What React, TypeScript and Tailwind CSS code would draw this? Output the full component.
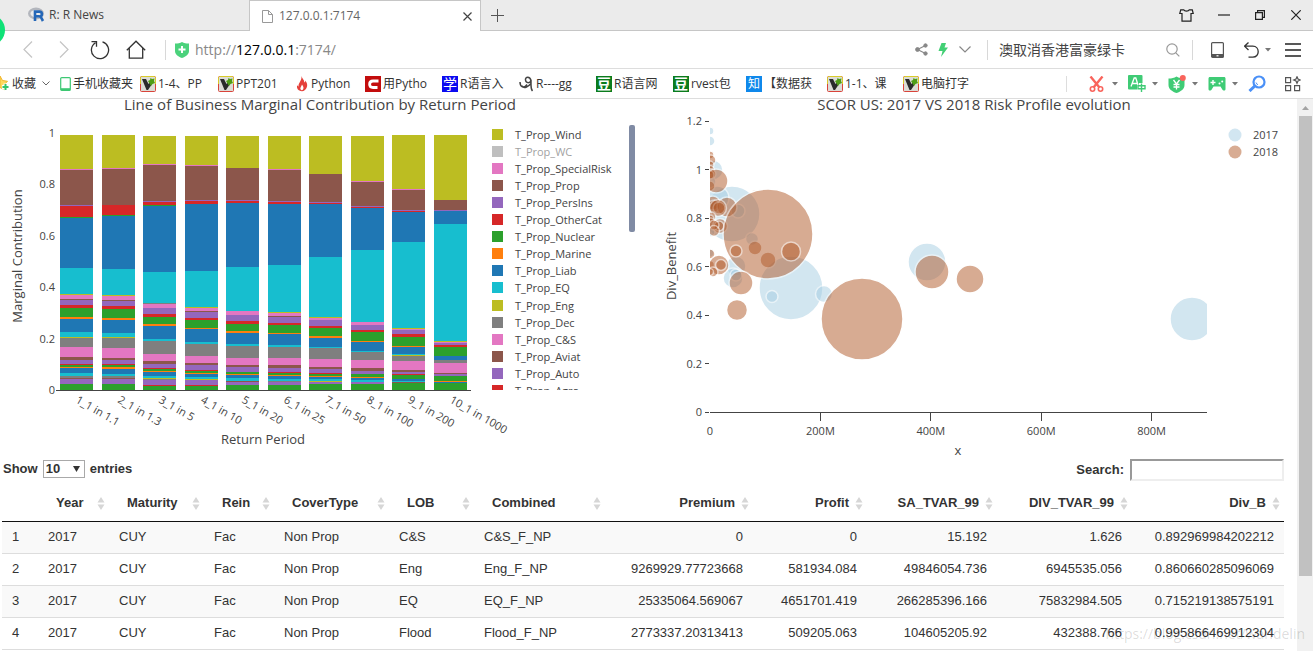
import type { ReactNode } from "react";

const COLORS: Record<string, string> = {
  Y: "#bcbd22",
  P: "#e377c2",
  B: "#8c564b",
  V: "#9467bd",
  R: "#d62728",
  G: "#2ca02c",
  O: "#ff7f0e",
  L: "#1f77b4",
  C: "#17becf",
  N: "#7f7f7f",
};

// Each stack runs top to bottom: colour key + segment height
const BARS = [
  { label: "1_1 in 1.1", x: 60, stack: "Y34 P1 B35 V1 R11 G1 L50 C26 Y1 P4 B1 V5 R3 G9 O2 L13 C5 Y1 N9 P10 B3 V4 R1 G2 O1 L5 C3 N2 B1 V5 G6" },
  { label: "2_1 in 1.3", x: 102, stack: "Y33 P1 B36 R10 G1 L53 C26 Y1 P4 B1 V5 R3 G9 O2 L13 C4 Y1 N10 P10 B2 V4 R1 G2 O2 L5 C2 N2 B1 V5 G6" },
  { label: "3_1 in 5", x: 143, stack: "Y28 P1 B36 V1 R3 G1 L66 C31 N1 P4 V6 R3 G7 O2 L13 C2 N13 P7 B3 V4 R1 G2 O1 L4 C2 Y1 N1 V5 R1 G4" },
  { label: "4_1 in 10", x: 185, stack: "Y29 P1 B34 V1 R3 L67 C36 Y1 P3 B1 V6 R2 G8 O1 L13 C2 N12 P7 B2 V5 R1 G2 O1 L3 C2 Y1 V5 R1 G4" },
  { label: "5_1 in 20", x: 226, stack: "Y32 B32 V1 R2 L64 C44 P4 V6 R3 G7 O2 L11 C2 N12 P7 B2 V5 G2 O1 L3 C3 B1 V3 G5" },
  { label: "6_1 in 25", x: 268, stack: "Y33 P1 B31 V1 R2 L61 C47 Y1 P3 B1 V6 R2 G8 O1 L11 C2 N11 P7 B3 V4 R1 G2 O1 L3 C2 N1 V3 G5" },
  { label: "7_1 in 50", x: 309, stack: "Y38 B28 V1 R1 L53 C60 Y1 P2 V6 R2 G8 O2 L9 C1 N11 P8 B2 V4 R1 G2 O1 L2 C2 Y1 V2 G6" },
  { label: "8_1 in 100", x: 351, stack: "Y45 P1 B24 V1 R1 L42 C72 P3 V5 R2 G9 O1 L9 C1 N8 P8 B3 V3 G3 O1 L2 C2 V2 G6" },
  { label: "9_1 in 200", x: 392, stack: "Y54 P1 B20 V1 R1 L30 C86 Y1 P1 V4 R3 G9 O1 L7 C1 Y1 N5 P9 B2 V2 R1 G4 L2 C1 B1 G7" },
  { label: "10_1 in 1000", x: 434, stack: "Y65 B10 V1 L13 C117 Y1 P1 V2 R2 G9 L4 N3 P10 B1 V2 G5 O1 L1 G7" },
];

const LEGEND = [
  ["T_Prop_Wind", "Y"],
  ["T_Prop_WC", "N"],
  ["T_Prop_SpecialRisk", "P"],
  ["T_Prop_Prop", "B"],
  ["T_Prop_PersIns", "V"],
  ["T_Prop_OtherCat", "R"],
  ["T_Prop_Nuclear", "G"],
  ["T_Prop_Marine", "O"],
  ["T_Prop_Liab", "L"],
  ["T_Prop_EQ", "C"],
  ["T_Prop_Eng", "Y"],
  ["T_Prop_Dec", "N"],
  ["T_Prop_C&S", "P"],
  ["T_Prop_Aviat", "B"],
  ["T_Prop_Auto", "V"],
  ["T_Prop_Agro", "R"],
];

// [cx, cy, r] measured from the plot's top left corner
const BUBBLES_2017 = [
  [0, 9, 4], [0, 19, 5], [3, 48, 10], [0, 60, 6], [22, 92, 28], [7, 76, 12], [28, 89, 7], [4, 84, 8],
  [0, 110, 5], [42, 117, 6.5], [26, 144, 10], [23, 156, 10], [26, 153, 6], [0, 131, 4], [81, 166, 32],
  [62, 174.5, 6], [114, 172, 8.5], [217, 140, 19], [482, 197, 22],
];
const BUBBLES_2018 = [
  [0, 33, 4], [1, 38, 5], [0, 43, 4], [0, 48, 4.5], [1, 52, 5], [0, 53, 4], [0, 64, 5], [6, 59, 12],
  [3, 81, 7], [4, 84, 6], [17, 85, 10], [9, 86, 6], [8, 86, 8.5], [1, 95, 5], [0, 97, 4], [1, 101, 5],
  [10, 104, 7.5], [9, 104, 5], [4, 103, 5], [4, 109, 5.5], [0, 132, 5], [0, 143, 4.5], [9, 143, 10], [11, 143, 5.5],
  [3, 150, 5], [0, 150, 3.5], [45, 126, 7], [58, 138, 8], [58, 112, 45], [26, 129, 6], [81, 129.5, 9.5],
  [31, 161, 12], [27, 188, 10.5], [152, 197, 41], [222, 150, 17], [260, 157, 14],
];

const COLUMNS = [
  { name: "", width: "w-8" },
  { name: "Year", width: "w-[71px]" },
  { name: "Maturity", width: "w-[95px]" },
  { name: "Rein", width: "w-[70px]" },
  { name: "CoverType", width: "w-[115px]" },
  { name: "LOB", width: "w-[85px]" },
  { name: "Combined", width: "w-[131px]" },
  { name: "Premium", width: "w-[148px]", num: true },
  { name: "Profit", width: "w-[114px]", num: true },
  { name: "SA_TVAR_99", width: "w-[130px]", num: true },
  { name: "DIV_TVAR_99", width: "w-[135px]", num: true },
  { name: "Div_B", width: "", num: true },
];

const ROWS = [
  ["1", "2017", "CUY", "Fac", "Non Prop", "C&S", "C&S_F_NP", "0", "0", "15.192", "1.626", "0.892969984202212"],
  ["2", "2017", "CUY", "Fac", "Non Prop", "Eng", "Eng_F_NP", "9269929.77723668", "581934.084", "49846054.736", "6945535.056", "0.860660285096069"],
  ["3", "2017", "CUY", "Fac", "Non Prop", "EQ", "EQ_F_NP", "25335064.569067", "4651701.419", "266285396.166", "75832984.505", "0.715219138575191"],
  ["4", "2017", "CUY", "Fac", "Non Prop", "Flood", "Flood_F_NP", "2773337.20313413", "509205.063", "104605205.92", "432388.766", "0.995866469912304"],
];

function Caret() {
  return (
    <svg width="6" height="4" viewBox="0 0 6 4" aria-hidden="true">
      <path d="M0 0h6L3 3.5z" fill="#777" />
    </svg>
  );
}

function Divider() {
  return <span className="h-5 w-px shrink-0 bg-[#d8d8d8]" />;
}

function IconButton({ label, className = "w-5", children }: { label: string; className?: string; children: ReactNode }) {
  return (
    <button aria-label={label} className={`flex h-6 shrink-0 items-center justify-center ${className}`}>
      {children}
    </button>
  );
}

function TabBar() {
  return (
    <div className="flex h-[31px] items-stretch border-b border-[#c6c6c6] bg-[#ebebeb] text-[12px] text-[#444]">
      <button className="flex w-[249px] items-center gap-1 pl-7">
        <svg width="17" height="16" viewBox="0 0 17 16" aria-hidden="true">
          <ellipse cx="8" cy="6.5" rx="6.8" ry="4.8" fill="none" stroke="#b3b6bd" strokeWidth="2.4" />
          <path d="M7 14V4.6h4.2c3.4 0 3.6 4.3.6 4.6 1.400.6 2.200 3 3.200 4.800M8 9.200h3.500" fill="none" stroke="#2467b8" strokeWidth="2.600" />
        </svg>
        R: R News
      </button>
      <div className="-mb-px flex w-[232px] items-center border-x border-t border-[#c6c6c6] bg-white pl-3 pr-2">
        <button className="flex flex-1 items-center gap-[6px] text-[#666]">
          <svg width="11" height="13" viewBox="0 0 11 13" fill="none" stroke="#999" aria-hidden="true">
            <path d="M.5.5h6l4 4v8H.5zM6.500.5v4h4" />
          </svg>
          127.0.0.1:7174
        </button>
        <IconButton label="Close tab" className="w-[10px]">
          <svg width="9" height="9" viewBox="0 0 9 9" stroke="#444" strokeWidth="1.200">
            <path d="M.5.5l8 8M8.500.5l-8 8" />
          </svg>
        </IconButton>
      </div>
      <button aria-label="New tab" className="flex w-8 items-center justify-center">
        <svg width="13" height="13" viewBox="0 0 13 13" stroke="#555">
          <path d="M6.500 0v13M0 6.500h13" />
        </svg>
      </button>
      <div className="ml-auto flex items-center gap-[18px] pr-[7px]">
        <IconButton label="Skins">
          <svg width="15" height="13" viewBox="0 0 15 13" fill="none" stroke="#222" strokeWidth="1.200">
            <path d="M4.700.8h-3L.8 4.500h2.200v7.700h9V4.500h2.200L13.300.8h-3c-.8 1.700-4.800 1.700-5.600 0z" />
          </svg>
        </IconButton>
        <IconButton label="Minimize">
          <svg width="12" height="2" viewBox="0 0 12 2">
            <path d="M0 1h12" stroke="#222" strokeWidth="1.200" />
          </svg>
        </IconButton>
        <IconButton label="Restore" className="w-4">
          <svg width="10" height="10" viewBox="0 0 10 10" fill="none" stroke="#222" strokeWidth="1.200">
            <path d="M.6 2.600h6.800v6.800H.6zM2.600 2.600V.6h6.800v6.800h-2" />
          </svg>
        </IconButton>
        <IconButton label="Close">
          <svg width="10" height="10" viewBox="0 0 10 10" stroke="#222" strokeWidth="1.200">
            <path d="M.3.3l9.400 9.400M9.700.3L.3 9.700" />
          </svg>
        </IconButton>
      </div>
    </div>
  );
}

function NavBar() {
  return (
    <div className="flex h-[38px] items-center border-b border-[#ddd] bg-white">
      <div className="flex items-center gap-4 pl-[18px]">
        <IconButton label="Back">
          <svg width="10" height="17" viewBox="0 0 10 17" fill="none" stroke="#c4c4c4" strokeWidth="1.200">
            <path d="M9 .5l-8 8 8 8" />
          </svg>
        </IconButton>
        <IconButton label="Forward">
          <svg width="10" height="17" viewBox="0 0 10 17" fill="none" stroke="#c4c4c4" strokeWidth="1.200">
            <path d="M1 .5l8 8-8 8" />
          </svg>
        </IconButton>
        <IconButton label="Reload">
          <svg width="20" height="20" viewBox="0 0 20 20" fill="none" stroke="#333" strokeWidth="1.300">
            <path d="M12.500 1.800A8.600 8.600 0 1 1 5.500 2.700M1.500 1.700h5v5" />
          </svg>
        </IconButton>
        <IconButton label="Home">
          <svg width="20" height="19" viewBox="0 0 20 19" fill="none" stroke="#333" strokeWidth="1.300">
            <path d="M.8 10.300L10 1.200l9.200 9.100M3.300 8v10.200h13.400V8" />
          </svg>
        </IconButton>
      </div>
      <div className="flex flex-1 items-center gap-[9px] pl-[19px] text-[14px]">
        <Divider />
        <svg width="14" height="16" viewBox="0 0 14 16" aria-hidden="true">
          <path d="M0 1.500C3 1.500 5 1 7 0c2 1 4 1.500 7 1.500V9c0 3.500-3 5.500-7 7-4-1.500-7-3.500-7-7z" fill="#4bd27c" />
          <path d="M7 4v7M3.500 7.500h7" stroke="#fff" strokeWidth="2" />
        </svg>
        <div
          role="textbox"
          aria-label="Address"
          contentEditable
          suppressContentEditableWarning
          className="-ml-1 flex-1 pl-px text-[#888] outline-none"
        >
          http://<span className="text-black">127.0.0.1</span>:7174/
        </div>
      </div>
      <div className="flex items-center gap-[2px] pr-[10px]">
        <IconButton label="Share">
          <svg width="13" height="13" viewBox="0 0 13 13" fill="#888" stroke="#888">
            <path d="M10.500 2.500L2.500 6.500l8 4" fill="none" strokeWidth="1.200" />
            <circle cx="10.500" cy="2.500" r="1.700" />
            <circle cx="2.500" cy="6.500" r="1.900" />
            <circle cx="10.500" cy="10.500" r="1.700" />
          </svg>
        </IconButton>
        <IconButton label="Speed mode">
          <svg width="10" height="14" viewBox="0 0 10 14" fill="#42cf74">
            <path d="M3.500 0H8L6.500 4.500H10L3 14l1.500-6H.5z" />
          </svg>
        </IconButton>
        <IconButton label="More">
          <svg width="12" height="7" viewBox="0 0 12 7" fill="none" stroke="#888" strokeWidth="1.200">
            <path d="M.5.5L6 6 11.500.5" />
          </svg>
        </IconButton>
        <span className="flex h-5 w-5 justify-center">
          <Divider />
        </span>
        <input
          aria-label="Web search"
          defaultValue="澳取消香港富豪绿卡"
          className="w-[162px] bg-transparent text-[14px] text-[#444] outline-none"
        />
        <IconButton label="Search">
          <svg width="14" height="14" viewBox="0 0 14 14" fill="none" stroke="#999" strokeWidth="1.200">
            <circle cx="6" cy="6" r="5.200" />
            <path d="M9.800 9.800L13.300 13.300" />
          </svg>
        </IconButton>
        <span className="flex h-5 w-[14px] justify-center">
          <Divider />
        </span>
        <IconButton label="Phone" className="w-8">
          <svg width="13" height="16" viewBox="0 0 13 16" fill="none" stroke="#555" strokeWidth="1.200">
            <rect x=".6" y=".6" width="11.800" height="14.800" rx="1" />
            <path d="M1 13.500h11" strokeWidth="3" />
            <path d="M5.500 13.800h2" stroke="#fff" />
          </svg>
        </IconButton>
        <IconButton label="Undo close" className="mr-[6px] w-10 gap-[6px] pl-1">
          <svg width="15" height="16" viewBox="0 0 15 16" fill="none" stroke="#333" strokeWidth="1.300">
            <path d="M4.500.5l-4 3.700 4 3.700M.5 4.200h8.300c7.200 0 7.200 11 0 11H4.500" />
          </svg>
          <Caret />
        </IconButton>
        <IconButton label="Menu">
          <svg width="16" height="14" viewBox="0 0 16 14" stroke="#222" strokeWidth="1.300">
            <path d="M0 1h16M0 7h16M0 13h16" />
          </svg>
        </IconButton>
      </div>
    </div>
  );
}

function VineIcon() {
  return (
    <svg width="16" height="16" viewBox="0 0 16 16" aria-hidden="true">
      <rect x=".5" y=".5" width="15" height="15" rx="1" fill="#dcdcd6" stroke="#d9433a" />
      <path d="M.5 8V1.500l1-1h13l1 1V8" fill="none" stroke="#d9cc2a" />
      <path d="M2 3h4l2.500 5L10 6l2 2-4 6H6.500z" fill="#2b2b2b" />
      <path d="M8 5l2-1 .5-2L12 3l2.500-.5L14 5l1 2-2.500 1L11 10 9.500 7.500z" fill="#4f9d16" />
    </svg>
  );
}

function GlyphIcon({ text, className }: { text: string; className: string }) {
  return <span className={`flex size-4 items-center justify-center leading-none text-white ${className}`}>{text}</span>;
}

const phoneIcon = (
  <svg width="11" height="14" viewBox="0 0 11 14" fill="none" stroke="#3dc873" aria-hidden="true">
    <rect x=".7" y=".6" width="9.600" height="12.800" rx="1" strokeWidth="1.200" />
    <path d="M1 12.200h9" strokeWidth="2" />
  </svg>
);

const flameIcon = (
  <svg width="14" height="16" viewBox="0 0 14 16" aria-hidden="true">
    <path d="M6.500 0c.8 3 3.200 4 2.700 6.500C10.500 6 10.300 5 10.300 4.500 12 7 13 9 11.500 12c-1 2-2.500 3-4.500 3.300C3 15 1.300 12 2.200 9c.3 1 .9 1.400 1.400 1.500C3 7 7 5 6.500 0z" fill="#e5403a" />
    <path d="M7 8.500c1.500 2 2 3.500 1 5-.8 1-2.200.8-2.600-.5C5 11.500 6.500 10.500 7 8.500z" fill="#fff" />
  </svg>
);

const chainIcon = (
  <svg width="15" height="16" viewBox="0 0 15 16" fill="none" stroke="#444" strokeWidth="1.500" aria-hidden="true">
    <path d="M1 6c0 5 4 7 7 2.500M12 4.500C11 0 6 .5 6.500 4c.5 3.500 5 3.500 5.500 0V9c0 3 .5 5 1.500 6M3 10c2 3 6 1 9-2.500" />
  </svg>
);

const cIcon = (
  <svg width="16" height="16" viewBox="0 0 16 16" aria-hidden="true">
    <path d="M0 0h16v16H0z" fill="#c30d0d" />
    <path d="M13.500 5H8C3.500 5 3.500 11.500 8 11.500h4.500" fill="none" stroke="#fff" strokeWidth="2.800" />
  </svg>
);

const BOOKMARKS = [
  { text: "手机收藏夹", icon: phoneIcon, width: "w-[80px]" },
  { text: "1-4、PP", icon: <VineIcon />, width: "w-[78px]" },
  { text: "PPT201", icon: <VineIcon />, width: "w-[77px]" },
  { text: "Python", icon: flameIcon, width: "w-[70px]" },
  { text: "用Pytho", icon: cIcon, width: "w-[77px]" },
  { text: "R语言入", icon: <GlyphIcon text="学" className="bg-[#0b0bf0] text-[14px]" />, width: "w-[77px]" },
  { text: "R----gg", icon: chainIcon, width: "w-[77px]" },
  { text: "R语言网", icon: <GlyphIcon text="豆" className="bg-[#0b7c1d] text-[14px] font-bold" />, width: "w-[77px]" },
  { text: "rvest包", icon: <GlyphIcon text="豆" className="bg-[#0b7c1d] text-[14px] font-bold" />, width: "w-[73px]" },
  { text: "【数据获", icon: <GlyphIcon text="知" className="bg-[#0f88eb] text-[12px]" />, width: "w-[81px]" },
  { text: "1-1、课", icon: <VineIcon />, width: "w-[76px]" },
  { text: "电脑打字", icon: <VineIcon />, width: "w-[77px]" },
];

function BookmarkBar() {
  return (
    <div className="flex h-[30px] items-center overflow-hidden border-b border-[#ddd] bg-white text-[12px] text-[#333]">
      <button className="flex w-[60px] shrink-0 items-center gap-[2px]">
        <svg width="10" height="17" viewBox="7 0 10 17" aria-hidden="true">
          <path d="M7 1l2.500 4.500 5 .8-3.500 3.500.8 5L7 12.500z" fill="#ffd95e" stroke="#f0b52e" />
          <path d="M12.500 8.500v7M9 12h7" stroke="#fff" strokeWidth="4" />
          <path d="M12.500 9v6M9.500 12h6" stroke="#35c46b" strokeWidth="2" />
        </svg>
        收藏
        <svg className="ml-1" width="8" height="5" viewBox="0 0 8 5" fill="none" stroke="#666" aria-hidden="true">
          <path d="M.5.5L4 4 7.500.5" />
        </svg>
      </button>
      {BOOKMARKS.map(({ text, icon, width }) => (
        <a key={text} href="#" className={`flex shrink-0 items-center gap-[2px] whitespace-nowrap ${width}`}>
          {icon}
          {text}
        </a>
      ))}
      <div className="ml-auto flex items-center pr-[11px]">
        <span className="mr-[21px] h-4 w-px bg-[#ddd]" />
        <IconButton label="Screenshot" className="w-10 justify-start gap-2 pl-px">
          <svg width="15" height="16" viewBox="0 0 15 16" fill="none" stroke="#f9645c" strokeWidth="2">
            <path d="M1.500.5l9 11M13.500.5l-9 11" strokeWidth="2.400" />
            <circle cx="3.500" cy="13" r="2.200" strokeWidth="1.600" />
            <circle cx="11.500" cy="13" r="2.200" strokeWidth="1.600" />
          </svg>
          <Caret />
        </IconButton>
        <IconButton label="Translate" className="w-10 justify-start gap-[6px]">
          <svg width="18" height="17" viewBox="0 0 18 17">
            <rect width="14.500" height="14.500" rx="1" fill="#3fcb75" />
            <path d="M3 11.500L6.200 3h1.600l2.200 7M4.500 8.500h4.500" fill="none" stroke="#fff" strokeWidth="1.300" />
            <path d="M13.500 8v9M9 12.500h9" fill="none" stroke="#fff" strokeWidth="5" />
            <path d="M13.500 8.500V17M10 10.800h7v3h-7z" fill="none" stroke="#3fcb75" strokeWidth="1.400" />
          </svg>
          <Caret />
        </IconButton>
        <IconButton label="Payment protection" className="w-10 justify-start gap-[6px]">
          <svg width="18" height="18" viewBox="0 0 18 18">
            <path d="M.5 3.500C4 3.500 6 3 8.500 1.500c2.500 1.500 4.500 2 8 2V10c0 4-3.500 6.500-8 8-4.500-1.500-8-4-8-8z" fill="#3fcb75" />
            <path d="M5.500 5l3 4 3-4M8.500 9v5.500M5.500 9.500h6M5.500 12h6" fill="none" stroke="#fff" strokeWidth="1.300" />
            <circle cx="14.800" cy="3" r="3" fill="#f9645c" />
          </svg>
          <Caret />
        </IconButton>
        <IconButton label="Games" className="w-10 justify-start gap-[6px]">
          <svg width="18" height="14" viewBox="0 0 18 14">
            <path d="M2 0h14c1 0 1.500.6 1.500 1.500V12c0 2-2.500 2-3.500 0l-1.500-2.500h-7L4 12c-1 2-3.500 2-3.500 0V1.500C.5.6 1 0 2 0z" fill="#3fcb75" />
            <path d="M5 3v5M2.500 5.500h5" stroke="#fff" strokeWidth="1.400" />
            <circle cx="11.500" cy="6.500" r="1" fill="#fff" />
            <circle cx="14.200" cy="4.500" r="1" fill="#fff" />
          </svg>
          <Caret />
        </IconButton>
        <IconButton label="Find" className="w-9 justify-start">
          <svg width="18" height="17" viewBox="0 0 18 17" fill="none" stroke="#4a90f7">
            <circle cx="11" cy="7" r="5.500" strokeWidth="2.200" />
            <path d="M6.800 11L1.500 16" strokeWidth="3" />
            <path d="M8 7.500a3 3 0 0 0 2 2.200" strokeWidth="1" />
          </svg>
        </IconButton>
        <IconButton label="Add-ons" className="w-[18px]">
          <svg width="16" height="16" viewBox="0 0 16 16" fill="none" stroke="#555" strokeWidth="1.200">
            <path d="M.6 1.600h5v5h-5zM.6 9.600h5v5h-5zM9.600 9.600h5v5h-5z" />
            <path d="M12 .8l1 2.200 2.300 1-2.300 1-1 2.300-1-2.300-2.300-1 2.300-1z" />
          </svg>
        </IconButton>
      </div>
    </div>
  );
}

function BarChart() {
  return (
    <svg
      className="h-[360px] w-full overflow-visible"
      viewBox="0 0 648 360"
      preserveAspectRatio="xMinYMin meet"
      fill="#444"
      fontFamily='"Open Sans", sans-serif'
      fontSize="11"
      role="img"
      aria-label="Line of Business Marginal Contribution by Return Period"
    >
      <text x="320" y="11" textAnchor="middle" fontSize="15">
        Line of Business Marginal Contribution by Return Period
      </text>
      {["0", "0.2", "0.4", "0.6", "0.8", "1"].map((t, i) => (
        <text key={t} x="55" y={295 - i * 51.4} textAnchor="end">
          {t}
        </text>
      ))}
      {BARS.map(({ label, x, stack }) => {
        let y = 291;
        const segments = stack.split(" ").reverse();
        return (
          <g key={label}>
            {segments.map((seg, i) => {
              const h = Number(seg.slice(1));
              y -= h;
              return <rect key={i} x={x} y={y} width="33" height={h} fill={COLORS[seg[0]]} />;
            })}
            <text transform={`translate(${x + 15} 303) rotate(30)`}>{label}</text>
          </g>
        );
      })}
      <path d="M56 291.500h415" stroke="#444" />
      <text x="263" y="345" textAnchor="middle" fontSize="13">
        Return Period
      </text>
      <text transform="translate(22 157) rotate(-90)" textAnchor="middle" fontSize="13">
        Marginal Contribution
      </text>
      <clipPath id="legend-clip">
        <rect x="480" y="20" width="150" height="271" />
      </clipPath>
      <g clipPath="url(#legend-clip)">
        {LEGEND.map(([name, key], i) => (
          <g key={name} opacity={name === "T_Prop_WC" ? 0.5 : 1}>
            <rect x="492" y={30 + Math.floor(i * 17.1)} width="11" height="11" fill={COLORS[key]} />
            <text x="515" y={40 + Math.floor(i * 17.1)}>
              {name}
            </text>
          </g>
        ))}
      </g>
      <rect x="629" y="26" width="6" height="107" rx="2" fill="#808ba4" />
    </svg>
  );
}

function BubbleChart() {
  return (
    <svg
      className="h-[360px] w-full overflow-visible"
      viewBox="0 0 649 360"
      preserveAspectRatio="xMinYMin meet"
      fill="#444"
      fontFamily='"Open Sans", sans-serif'
      fontSize="11"
      role="img"
      aria-label="SCOR US: 2017 VS 2018 Risk Profile evolution"
    >
      <text x="326" y="11" textAnchor="middle" fontSize="15">
        SCOR US: 2017 VS 2018 Risk Profile evolution
      </text>
      {["0", "0.2", "0.4", "0.6", "0.8", "1", "1.2"].map((t, i) => (
        <g key={t}>
          <text x="54" y={317 - i * 48.5} textAnchor="end">
            {t}
          </text>
          <path d={`M57 ${Math.floor(313 - i * 48.5) + 0.5}h4`} stroke="#444" />
        </g>
      ))}
      {["0", "200M", "400M", "600M", "800M"].map((t, i) => (
        <g key={t}>
          {i > 0 && <path d={`M${Math.floor(62 + i * 110.4) + 0.5} 314v8`} stroke="#444" />}
          <text x={62 + i * 110.4} y="336" textAnchor="middle">
            {t}
          </text>
        </g>
      ))}
      <clipPath id="plot-clip">
        <rect width="497" height="290" />
      </clipPath>
      <g transform="translate(62 23)" clipPath="url(#plot-clip)" stroke="#fff" strokeWidth="1.500">
        {BUBBLES_2017.map(([cx, cy, r], i) => (
          <circle key={i} cx={cx} cy={cy} r={r} fill="#a6cee3" opacity="0.5" />
        ))}
        {BUBBLES_2018.map(([cx, cy, r], i) => (
          <circle key={i} cx={cx} cy={cy} r={r} fill="#b15928" opacity="0.5" />
        ))}
      </g>
      <path d="M62 313.500h497" stroke="#444" />
      <text x="310" y="356" textAnchor="middle" fontSize="13">
        x
      </text>
      <text transform="translate(28 167) rotate(-90)" textAnchor="middle" fontSize="13">
        Div_Benefit
      </text>
      <circle cx="587" cy="36" r="6.500" fill="#a6cee3" opacity="0.5" />
      <text x="605" y="40">2017</text>
      <circle cx="587" cy="53" r="6.500" fill="#b15928" opacity="0.5" />
      <text x="605" y="57">2018</text>
    </svg>
  );
}

function DataTable() {
  return (
    <div className="pl-[2px] pr-[13px] font-['Liberation_Sans',Arial,sans-serif] text-[13px] text-[#333]">
      <div className="flex h-[26px] items-start justify-between">
        <label className="flex items-center gap-[5px] pl-px font-bold">
          Show
          <span className="relative flex">
            <select className="h-[18px] w-[42px] appearance-none border border-[#a9a9a9] bg-white pl-[2px] text-[13px] leading-4 font-bold">
              <option>10</option>
              <option>25</option>
              <option>50</option>
              <option>100</option>
            </select>
            <svg className="pointer-events-none absolute top-[6px] right-[5px]" width="7" height="6" viewBox="0 0 7 6" aria-hidden="true">
              <path d="M0 0h7L3.500 6z" fill="#333" />
            </svg>
          </span>
          entries
        </label>
        <label className="flex items-center gap-[6px] font-bold">
          Search:
          <input type="search" className="h-[22px] w-[154px] border-2 border-[#eee] border-t-[#999] border-l-[#999] bg-white px-1 font-normal" />
        </label>
      </div>
      <table className="w-full table-fixed border-collapse">
        <thead>
          <tr className="h-9 border-b border-[#111]">
            {COLUMNS.map(({ name, width, num }) => (
              <th key={name} className={`relative px-[18px] font-bold ${width} ${num ? "text-right" : "text-left"}`}>
                {name}
                {name && (
                  <svg className="absolute top-[12px] right-1" width="8" height="13" viewBox="0 0 8 13" fill="#d6d6d6" aria-hidden="true">
                    <path d="M4 0l3.500 5.500h-7zM4 13L.5 7.500h7z" />
                  </svg>
                )}
              </th>
            ))}
          </tr>
        </thead>
        <tbody>
          {ROWS.map((row) => (
            <tr key={row[0]} className="h-8 border-b border-[#ddd] odd:bg-[#f9f9f9] first:bg-[#f5f5f5]">
              {row.map((cell, i) => (
                <td key={i} className={`px-[10px] ${COLUMNS[i].num ? "text-right" : "text-left"}`}>
                  {cell}
                </td>
              ))}
            </tr>
          ))}
        </tbody>
      </table>
    </div>
  );
}

function ScrollTrack() {
  return (
    <div className="flex w-4 shrink-0 flex-col items-center bg-[#f1f1f1]">
      <svg className="mt-[7px] mb-[6px]" width="7" height="4" viewBox="0 0 7 4" aria-hidden="true">
        <path d="M3.500 0L7 4H0z" fill="#a3a3a3" />
      </svg>
      <div className="h-[460px] w-[13px] bg-[#c1c1c1]" />
    </div>
  );
}

export default function App() {
  return (
    <div className="relative flex min-h-screen flex-col overflow-hidden bg-white font-['Open_Sans','Noto_Sans_CJK_SC',sans-serif]">
      <div className="absolute top-[14px] -left-[27px] size-8 rounded-full bg-[#0fe277]" />
      <TabBar />
      <NavBar />
      <BookmarkBar />
      <div className="flex flex-1">
        <main className="min-w-0 flex-1">
          <div className="grid grid-cols-[648fr_649fr]">
            <BarChart />
            <BubbleChart />
          </div>
          <DataTable />
        </main>
        <ScrollTrack />
      </div>
      <span className="pointer-events-none absolute right-[8px] bottom-[7px] text-[14px] leading-5 text-black/15">
        https://blog.csdn.net/wandelin
      </span>
    </div>
  );
}
